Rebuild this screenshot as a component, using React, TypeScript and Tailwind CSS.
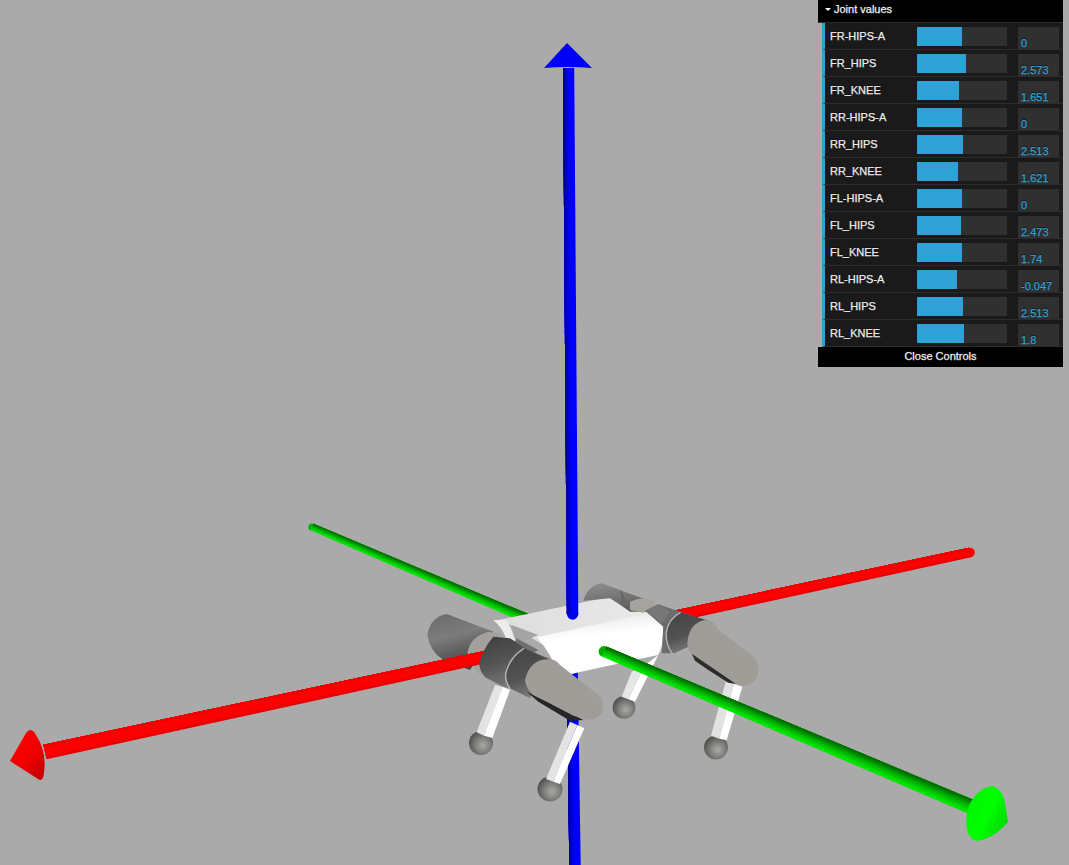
const joints: [string, number, string][] = [
  ["FR-HIPS-A", 45, "0"],
  ["FR_HIPS", 49, "2.573"],
  ["FR_KNEE", 42, "1.651"],
  ["RR-HIPS-A", 45, "0"],
  ["RR_HIPS", 46, "2.513"],
  ["RR_KNEE", 41, "1.621"],
  ["FL-HIPS-A", 45, "0"],
  ["FL_HIPS", 44, "2.473"],
  ["FL_KNEE", 45, "1.74"],
  ["RL-HIPS-A", 40, "-0.047"],
  ["RL_HIPS", 46, "2.513"],
  ["RL_KNEE", 47, "1.8"],
];

type TubeProps = { a: number[]; b: number[]; ha: number; hb: number; colors: string[]; capA?: boolean; capB?: boolean };

function Tube({ a, b, ha, hb, colors, capA, capB }: TubeProps) {
  const dx = b[0] - a[0];
  const dy = b[1] - a[1];
  const l = Math.hypot(dx, dy);
  const nx = -dy / l;
  const ny = dx / l;
  const n = colors.length;
  const mid = colors[Math.floor(n / 2)];
  return (
    <g>
      {capA && <circle cx={a[0]} cy={a[1]} r={ha} fill={mid} />}
      {capB && <circle cx={b[0]} cy={b[1]} r={hb} fill={mid} />}
      {colors.map((c, i) => {
        const t0 = -1 + (2 * i) / n;
        const pts = [
          [a[0] + nx * ha * t0, a[1] + ny * ha * t0],
          [b[0] + nx * hb * t0, b[1] + ny * hb * t0],
          [b[0] + nx * hb, b[1] + ny * hb],
          [a[0] + nx * ha, a[1] + ny * ha],
        ];
        return <polygon key={i} points={pts.map((p) => p.join(",")).join(" ")} fill={c} />;
      })}
    </g>
  );
}

const RED = ["#e40000", "#f40000", "#fc0000", "#ff0000", "#ff0000", "#ff0000", "#f80000", "#ea0000"];
const GREEN = ["#00e600", "#00de00", "#00d000", "#00c000", "#00ae00", "#009800", "#008000", "#006c00"];
const BLUE = ["#0000ff", "#0000ff", "#0000ff", "#0000ff", "#0000f0", "#0000dc", "#0000c0", "#000098"];

function Ball({ cx, cy, r }: { cx: number; cy: number; r: number }) {
  return <circle cx={cx} cy={cy} r={r} fill="url(#ball)" />;
}

function Scene() {
  return (
    <svg className="absolute inset-0" width="1069" height="865" viewBox="0 0 1069 865">
      <defs>
        <radialGradient id="ball" cx="0.58" cy="0.6" r="0.62">
          <stop offset="0" stopColor="#aaaaa6" />
          <stop offset="0.5" stopColor="#7f7f7c" />
          <stop offset="1" stopColor="#4e4e4e" />
        </radialGradient>
        <linearGradient id="motorA" x1="0.35" y1="0" x2="0.65" y2="1">
          <stop offset="0" stopColor="#6e6e6e" />
          <stop offset="0.35" stopColor="#7c7c7c" />
          <stop offset="0.7" stopColor="#5a5a5a" />
          <stop offset="1" stopColor="#444444" />
        </linearGradient>
        <linearGradient id="motorF" x1="0.35" y1="0" x2="0.65" y2="1">
          <stop offset="0" stopColor="#404040" />
          <stop offset="0.5" stopColor="#565656" />
          <stop offset="1" stopColor="#7c7c7c" />
        </linearGradient>
        <linearGradient id="motorB" x1="0.3" y1="0" x2="0.6" y2="1">
          <stop offset="0" stopColor="#454545" />
          <stop offset="0.55" stopColor="#525252" />
          <stop offset="1" stopColor="#808080" />
        </linearGradient>
        <linearGradient id="motorBack" x1="0.2" y1="0" x2="0.5" y2="1">
          <stop offset="0" stopColor="#8c8c8c" />
          <stop offset="0.5" stopColor="#767676" />
          <stop offset="1" stopColor="#5c5c5c" />
        </linearGradient>
        <linearGradient id="body" x1="0.4" y1="0" x2="0.6" y2="1">
          <stop offset="0" stopColor="#e6e6e6" />
          <stop offset="0.35" stopColor="#ffffff" />
          <stop offset="0.8" stopColor="#ffffff" />
          <stop offset="1" stopColor="#f7f3ec" />
        </linearGradient>
        <linearGradient id="plate" x1="0" y1="0" x2="1" y2="0">
          <stop offset="0" stopColor="#dcdcdc" />
          <stop offset="1" stopColor="#ececec" />
        </linearGradient>
        <linearGradient id="coneRed" x1="0" y1="0" x2="0.8" y2="1">
          <stop offset="0" stopColor="#ff0000" />
          <stop offset="0.6" stopColor="#f00000" />
          <stop offset="1" stopColor="#c40000" />
        </linearGradient>
        <linearGradient id="coneGreen" x1="0" y1="0" x2="1" y2="0.6">
          <stop offset="0" stopColor="#00f000" />
          <stop offset="0.6" stopColor="#00ff00" />
          <stop offset="1" stopColor="#00dc00" />
        </linearGradient>
        <linearGradient id="coneBlue" x1="0" y1="0" x2="0" y2="1">
          <stop offset="0" stopColor="#0000f0" />
          <stop offset="1" stopColor="#0000ff" />
        </linearGradient>
      </defs>

      {/* green far */}
      <Tube a={[530, 620]} b={[312, 527]} ha={4.8} hb={3.6} colors={GREEN} capB />

      {/* back-left motor */}
      <g transform="translate(410 570) scale(0.33333)">
        <path d="M52,195 Q60,142 110,132 L250,185 L180,300 L100,270 Q60,245 52,195Z" fill="url(#motorA)" />
        <path d="M172,250 Q180,200 235,185 L275,192 L215,255 L208,295 L215,318 Q180,290 172,250Z" fill="#a4a19c" />
      </g>

      {/* red axis: the two visible stretches */}
      <Tube a={[970, 552.5]} b={[670, 617.2]} ha={4.8} hb={5.7} colors={RED} capA />
      <Tube a={[490, 656]} b={[45, 752]} ha={6.2} hb={7.4} colors={RED} />
      <path d="M10,761 L26,733 Q31,726 36,735 Q47,752 44,772 Q43,783 38,779Z" fill="url(#coneRed)" />

      {/* blue axis lower */}
      <Tube a={[572, 650]} b={[575, 865]} ha={5.5} hb={5.7} colors={BLUE} />

      {/* chassis */}
      <g transform="translate(410 570) scale(0.33333)">
        <path d="M250,153 L600,80 L640,82 L700,120 L790,135 L400,225 L285,155Z" fill="url(#plate)" />
        <path d="M250,150 L290,150 Q305,175 316,212 L290,212 Q280,175 250,150Z" fill="#ececec" />
        <path d="M305,165 L385,195 L355,207 L318,212Z" fill="#a4a4a4" />
      </g>

      {/* back right motor top */}
      <g transform="translate(580 570) scale(0.33333)">
        <path d="M10,92 Q25,45 65,40 L195,88 L215,125 L150,125 L118,103 L90,85Z" fill="url(#motorBack)" />
        <path d="M120,58 L150,110 L128,105 Z" fill="#666666" />
        <path d="M150,95 Q175,82 200,85 Q225,90 225,105 L190,128 L150,120Z" fill="#a6a39e" />
      </g>

      <path d="M537,637 L650,613 Q664,617 663,633 Q663,648 658,655 L580,672 L560,677 Q552,655 537,637Z" fill="url(#body)" />

      {/* blue axis upper */}
      <Tube a={[568.6, 68]} b={[572.6, 614]} ha={5.6} hb={5.7} colors={BLUE} capB />
      <path d="M567,43 L592,68 Q568,66 544,68Z" fill="url(#coneBlue)" />

      {/* back legs */}
      <Ball cx={624} cy={707.5} r={11.3} />
      <Ball cx={716} cy={747.5} r={12} />
      <g transform="translate(580 570) scale(0.33333)">
        <path d="M155,305 L125,380 L145,388 L195,285Z" fill="#e6e6e6" />
        <path d="M195,285 L145,388 L165,395 L235,255Z" fill="#ffffff" />
        <path d="M437,335 L393,497 L418,506 L462,342Z" fill="#e2e2e2" />
        <path d="M462,342 L418,506 L440,511 L487,350Z" fill="#ffffff" />
      </g>

      {/* right motor + capsule */}
      <g transform="translate(580 570) scale(0.33333)">
        <path d="M195,122 L235,103 L300,125 L385,152 L320,232 L282,250 L245,250 L250,170Z" fill="#6c6c6c" />
        <path d="M235,103 L270,125 L245,160 L200,122Z" fill="#777777" />
        <path d="M262,190 Q265,145 302,127 L385,152 Q340,180 322,232 L280,250 Q262,225 262,190Z" fill="url(#motorB)" />
        <path d="M302,127 Q265,145 258,190 Q258,228 278,252" fill="none" stroke="#b4b4b0" strokeWidth="4" />
        <path d="M335,250 L345,272 L385,300 L445,338 L470,342Z" fill="#2c2c2c" />
        <path d="M322,222 Q325,160 375,150 Q405,150 415,180 L515,255 Q545,285 530,325 Q505,360 465,340 L345,258 Q325,245 322,222Z" fill="#a09d98" />
      </g>

      {/* front legs */}
      <Ball cx={481} cy={743} r={12} />
      <Ball cx={550} cy={789} r={12.5} />
      <g transform="translate(460 680) scale(0.33333)">
        <path d="M105,15 L50,157 L72,167 L128,20Z" fill="#e4e4e4" />
        <path d="M128,20 L72,167 L97,174 L150,30Z" fill="#ffffff" />
        <path d="M330,125 L258,297 L280,305 L352,135Z" fill="#e4e4e4" />
        <path d="M352,135 L280,305 L300,312 L373,145Z" fill="#ffffff" />
      </g>

      {/* front motor + capsule */}
      <g transform="translate(410 570) scale(0.33333)">
        <path d="M320,205 L385,240 L350,260 L310,230Z" fill="#707070" />
        <path d="M208,285 Q212,245 250,200 L300,205 L345,235 Q300,265 285,310 Q285,335 300,355 L280,350 L225,322Q210,305 208,285Z" fill="url(#motorF)" />
        <path d="M342,235 L420,268 L360,385 L300,355 Q285,335 287,310 Q300,260 342,235Z" fill="url(#motorB)" />
        <path d="M342,235 Q300,260 287,310 Q285,335 300,355" fill="none" stroke="#b8b8b4" strokeWidth="4" />
        <path d="M350,365 L385,395 L480,452 L520,450Z" fill="#262626" />
        <path d="M345,330 Q360,265 420,268 Q440,270 450,285 L565,375 Q590,400 575,430 Q555,455 525,448 L490,437 L395,386 Q350,370 345,330Z" fill="#a09d98" />
      </g>

      {/* green near */}
      <Tube a={[975, 808.5]} b={[604, 651.5]} ha={7.4} hb={5.4} colors={GREEN} capB />
      <path d="M1008,822 L1005,803 Q1002,788 992,786 Q978,788 969,805 Q964,822 968,833 Q972,843 982,840 Q996,836 1008,822Z" fill="url(#coneGreen)" />
    </svg>
  );
}

export default function App() {
  return (
    <div className="relative h-[865px] w-[1069px] overflow-hidden bg-[#aaaaaa] font-['Liberation_Sans',Arial,sans-serif] text-[11px] text-[#eeeeee] [-webkit-text-stroke:0.25px] [text-shadow:0_-1px_0_#111]">
      <Scene />
      <div className="absolute right-[6px] top-0 w-[245px]">
        <div className="flex h-[23px] items-center border-b border-[#2c2c2c] bg-black pb-[4px] pl-[7px]">
          <span className="mr-[3px] h-0 w-0 border-x-[3px] border-t-[3px] border-x-transparent border-t-white" />
          <span>Joint values</span>
        </div>
        <ul className="pl-[4px]">
          {joints.map(([name, fill, value]) => (
            <li key={name} className="flex h-[27px] items-start border-b border-l-[3px] border-[#2c2c2c] border-l-[#2fa1d6] bg-[#1a1a1a] pt-[4px]">
              <span className="w-[92px] pl-[5px] leading-[18px]">{name}</span>
              <div className="h-[19px] w-[90px] bg-[#303030]">
                <div className="h-full bg-[#2fa1d6]" style={{ width: `${fill}px` }} />
              </div>
              <div className="ml-[11px] flex h-[22px] w-[41px] items-end bg-[#303030] pl-[3px] leading-[11px] text-[#2fa1d6]">{value}</div>
            </li>
          ))}
        </ul>
        <div className="flex h-[20px] items-center justify-center bg-black pb-[2px]">Close Controls</div>
      </div>
    </div>
  );
}
